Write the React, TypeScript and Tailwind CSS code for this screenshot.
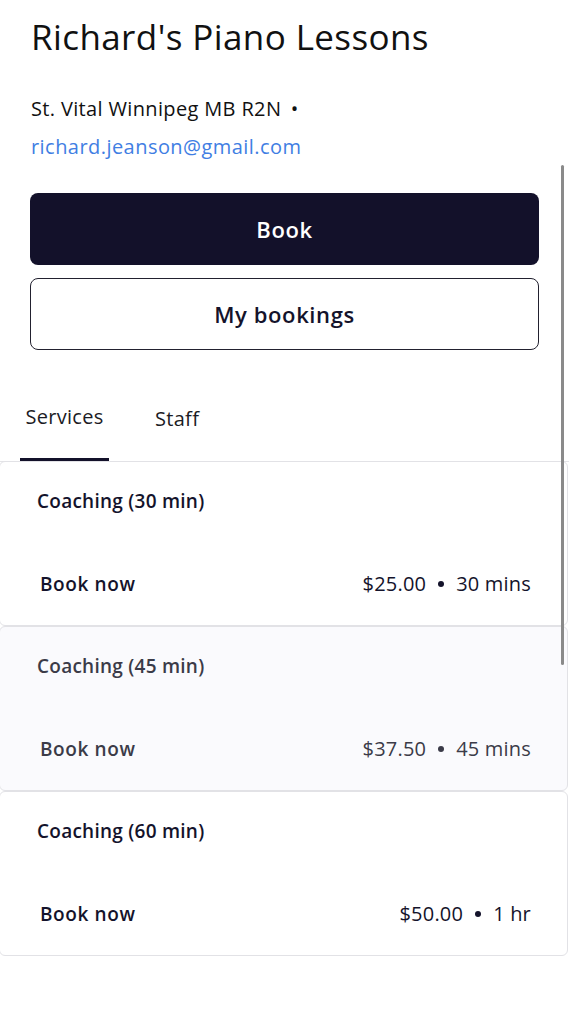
import React from "react";

type Service = {
  name: string;
  price: string;
  duration: string;
  muted?: boolean;
};

const services: Service[] = [
  { name: "Coaching (30 min)", price: "$25.00", duration: "30 mins" },
  { name: "Coaching (45 min)", price: "$37.50", duration: "45 mins", muted: true },
  { name: "Coaching (60 min)", price: "$50.00", duration: "1 hr" },
];

function ServiceCard({ s }: { s: Service }) {
  return (
    <div
      className={
        s.muted
          ? "h-[165px] -mx-px rounded-md border border-[#e2e2e6] bg-[#fafafd] text-[#3b3b48] flex flex-col"
          : "h-[165px] -mx-px rounded-md border border-[#e2e2e6] bg-white text-[#14132b] flex flex-col"
      }
    >
      <p className="pl-[37px] pt-[27px] text-[19px] font-semibold leading-6 tracking-[0.25px]">
        {s.name}
      </p>
      <div className="mt-auto mb-[29px] flex items-center justify-between pl-[40px] pr-[36px]">
        <span className="text-[19px] font-semibold leading-6 tracking-[0.6px]">Book now</span>
        <span className="flex items-center text-[20px] leading-6 tracking-[0.2px]">
          {s.price}
          <span className="mx-[12px] inline-block h-[6px] w-[6px] rounded-full bg-current" />
          {s.duration}
        </span>
      </div>
    </div>
  );
}

export default function App() {
  return (
    <div className="relative min-h-screen overflow-hidden bg-white font-['Open_Sans',sans-serif] text-[#111]">
      <div className="px-[30px] pt-[15px]">
        <h1 className="pl-px text-[35px] leading-[44px] font-normal tracking-[0.4px]">
          Richard's Piano Lessons
        </h1>
        <p className="mt-[38px] pl-px text-[20px] leading-6 tracking-[0.35px]">
          St. Vital Winnipeg MB R2N <span className="ml-1">•</span>
        </p>
        <a
          href="#"
          className="mt-[14px] block pl-px text-[20px] leading-6 text-[#3f7ee3] tracking-[0.45px]"
        >
          richard.jeanson@gmail.com
        </a>

        <button className="mt-[34px] h-[72px] w-full rounded-lg bg-[#13112a] text-[22px] font-semibold tracking-[0.6px] text-white">
          Book
        </button>
        <button className="mt-[13px] h-[72px] w-full rounded-lg border-[1.5px] border-[#22212f] bg-white text-[22px] font-semibold tracking-[0.6px] text-[#14132b]">
          My bookings
        </button>
      </div>

      <div className="mt-[38px] flex border-b border-[#e4e4e7] pl-[20px]">
        <div className="flex h-[73px] w-[89px] items-center justify-center border-b-[3px] border-[#13112a] pb-[12px]">
          <span className="text-[20px] tracking-[0.3px] text-[#1b1b24]">Services</span>
        </div>
        <div className="flex h-[73px] items-center pl-[46px] pb-[12px]">
          <span className="text-[20px] tracking-[0.3px] text-[#1b1b24]">Staff</span>
        </div>
      </div>

      <div className="-mt-px flex flex-col pr-[2px]">
        {services.map((s) => (
          <ServiceCard key={s.name} s={s} />
        ))}
      </div>

      <div className="absolute right-[5px] top-[165px] h-[500px] w-[3px] rounded-full bg-[#8a8a8a]" />
    </div>
  );
}
